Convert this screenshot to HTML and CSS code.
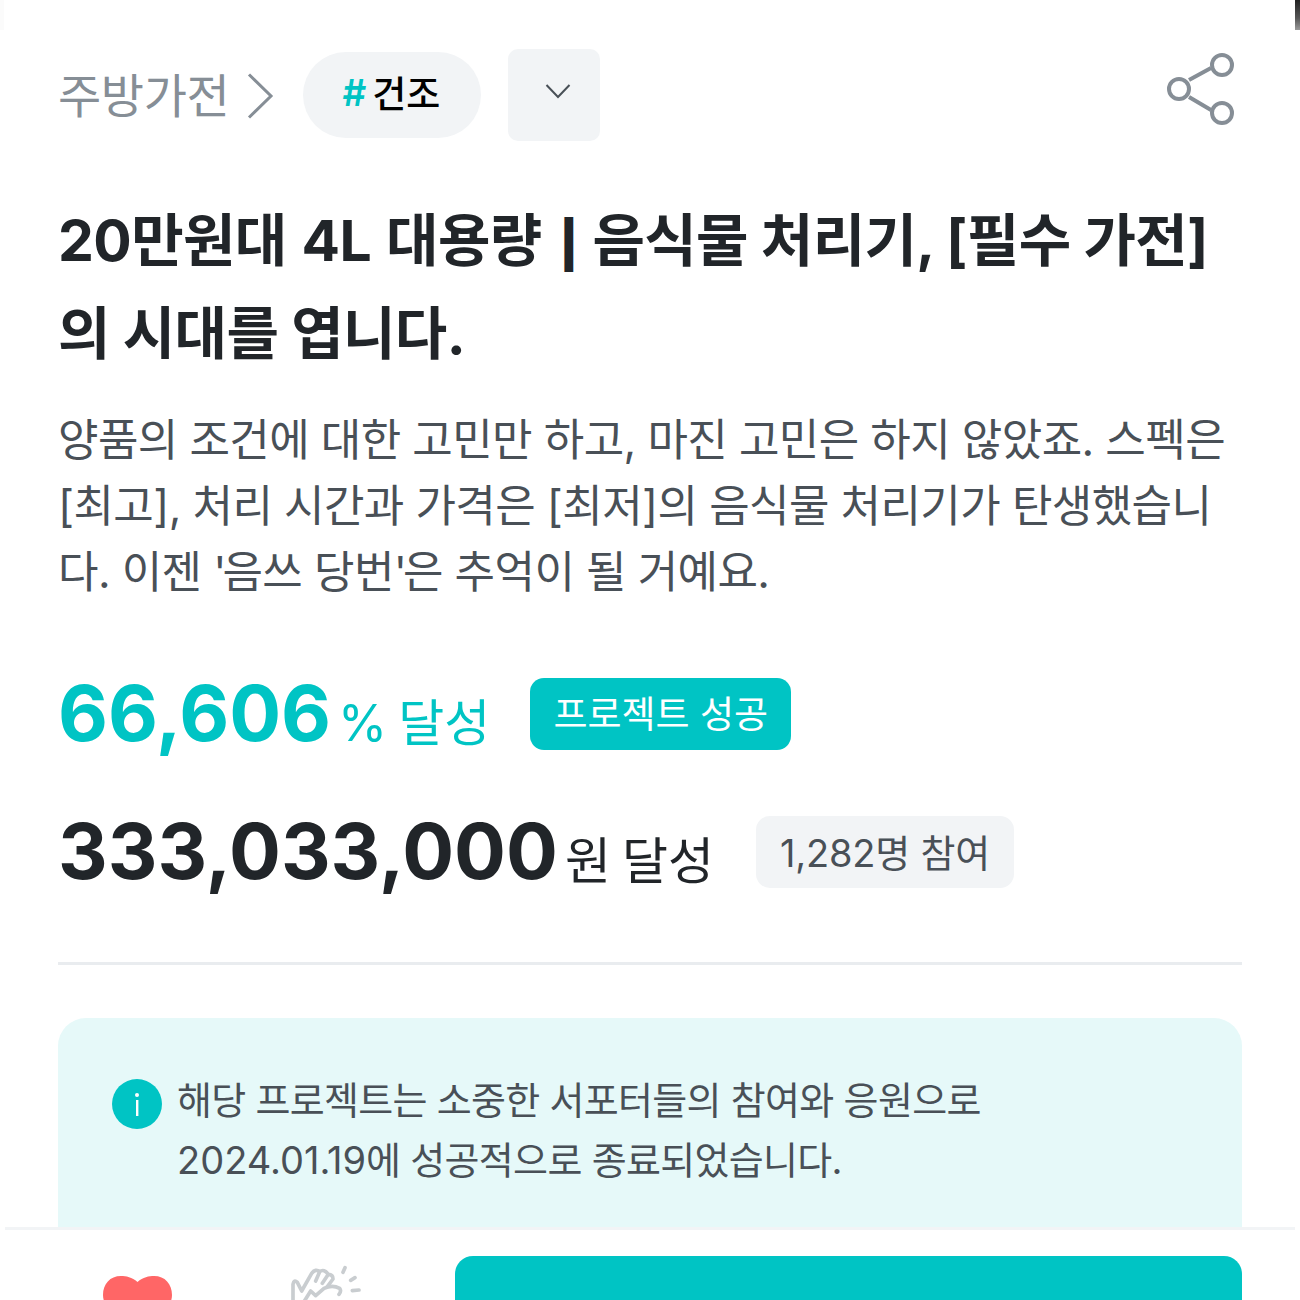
FILE: index.html
```html
<!DOCTYPE html>
<html lang="ko">
<head>
    <meta charset="UTF-8">
    <title>프로젝트 상세</title>
    <link rel="stylesheet" href="styles.css">
</head>
<body>
    <div id="page">
        <div class="edge edge_left"></div>
        <div class="edge edge_right"></div>

        <div class="top_row">
            <span class="category">주방가전</span>
            <svg class="crumb_arrow" width="28" height="46" viewBox="0 0 28 46">
                <path d="M3 1.500 L25 23 L3 44.500" fill="none" stroke="#868e96" stroke-width="3"/>
            </svg>
            <span class="tag"><span class="hash">#</span>건조</span>
            <span class="more_btn">
                <svg width="26" height="16" viewBox="0 0 26 16">
                    <path d="M1.500 2 L13 14 L24.500 2" fill="none" stroke="#495057" stroke-width="2"/>
                </svg>
            </span>
            <svg class="share" width="70" height="72" viewBox="0 0 70 72">
                <path d="M23 27 L45 15 M23 44 L45 57" stroke="#868e96" stroke-width="4" fill="none"/>
                <circle cx="13" cy="36" r="10" fill="none" stroke="#868e96" stroke-width="4"/>
                <circle cx="56" cy="12" r="10" fill="none" stroke="#868e96" stroke-width="4"/>
                <circle cx="56" cy="60" r="10" fill="none" stroke="#868e96" stroke-width="4"/>
            </svg>
        </div>

        <h1 class="title">20만원대 <span class="latin">4L</span> 대용량 <span class="bar">|</span> 음식물 처리기, [필수 가전]<br>의 시대를 엽니다.</h1>
        <p class="desc">양품의 조건에 대한 고민만 하고, 마진 고민은 하지 않았죠. 스펙은<br>[최고], 처리 시간과 가격은 [최저]의 음식물 처리기가 탄생했습니<br>다. 이젠 <span class="quote">'</span>음쓰 당번<span class="quote">'</span>은 추억이 될 거예요.</p>

        <div class="stat stat_rate">
            <span class="num">66,606</span>
            <span class="unit">% 달성</span>
            <span class="badge badge_success">프로젝트 성공</span>
        </div>
        <div class="stat stat_amount">
            <span class="num">333,033,000</span>
            <span class="unit">원 달성</span>
            <span class="badge badge_count">1,282명 참여</span>
        </div>

        <div class="divider"></div>

        <div class="notice">
            <span class="info_icon">
                <svg width="50" height="50" viewBox="0 0 50 50">
                    <circle cx="25" cy="25" r="25" fill="#00c4c4"/>
                    <circle cx="25" cy="16" r="2" fill="#fff"/>
                    <rect x="24" y="21" width="2.400" height="16" fill="#fff"/>
                </svg>
            </span>
            <p>해당 프로젝트는 소중한 서포터들의 참여와 응원으로<br><span class="date">2024.01.19</span>에 성공적으로 종료되었습니다.</p>
        </div>

        <div class="bottom_bar">
            <svg class="heart" width="69" height="60" viewBox="0 0 69 60">
                <path d="M34.500 6 C29 1 23 0 18 0 C7 0 0 8 0 19 C0 34 20 50 34.500 60 C49 50 69 34 69 19 C69 8 62 0 51 0 C46 0 40 1 34.500 6 Z" fill="#ff6666"/>
            </svg>
            <svg class="clap" width="110" height="45" viewBox="0 0 330 135">
                <g fill="none" stroke="#c9cdd0" stroke-width="11" stroke-linecap="round" stroke-linejoin="round">
                    <path d="M72 140 L72 88 Q75 72 85 82 L98 108 L128 55 Q140 40 152 50 L140 78 M152 50 Q165 40 178 58 L160 85 M178 58 Q192 58 192 72 L175 95"/>
                    <path d="M105 140 L125 108 L140 122 L165 100 Q190 88 212 100 Q218 108 210 118"/>
                    <path d="M228 38 L222 52 M258 68 L245 76 M270 105 L250 107"/>
                </g>
            </svg>
            <div class="cta"></div>
        </div>
    </div>
</body>
</html>
```

FILE: styles.css
```css
* {
    box-sizing: border-box;
}

html, body {
    margin: 0;
    background-color: white;
}

#page {
    position: relative;
    width: 1300px;
    height: 1300px;
    overflow: hidden;
    padding: 49px 58px 0 58px;
    font-family: Inter, "Noto Sans CJK KR", sans-serif;
    color: #212529;
}

.edge {
    position: absolute;
    top: 0;
    height: 30px;
}

.edge_left {
    left: 0;
    width: 4px;
    background-color: #fbfbfb;
}

.edge_right {
    right: 0;
    width: 5px;
    background: linear-gradient(#222, #555 60%, #999);
}

.top_row {
    display: flex;
    align-items: center;
    height: 92px;
}

.category {
    font-size: 47px;
    color: #868e96;
    letter-spacing: -0.4px;
    line-height: 1;
}

.crumb_arrow {
    margin-left: 17px;
    margin-top: 2px;
}

.tag {
    display: flex;
    align-items: center;
    justify-content: center;
    width: 178px;
    height: 86px;
    margin-left: 29px;
    padding-bottom: 6px;
    padding-right: 2px;
    border-radius: 43px;
    background-color: #f2f4f6;
    font-size: 37px;
    font-weight: 500;
    color: black;
}

.hash {
    color: #00c4c4;
    margin-right: 6px;
    font-weight: 600;
}

.more_btn {
    display: flex;
    justify-content: center;
    width: 92px;
    height: 92px;
    margin-left: 27px;
    padding-top: 34px;
    padding-left: 7px;
    border-radius: 10px;
    background-color: #f2f4f6;
}

.share {
    margin-left: auto;
    margin-right: 6px;
    margin-top: -13px;
}

.title {
    margin: 53px 0 0 0;
    font-size: 57px;
    line-height: 93px;
    font-weight: 700;
    letter-spacing: -0.6px;
    color: #212529;
    white-space: nowrap;
}

.latin {
    margin: 0 2px;
}

.bar {
    margin: 0 2px 0 5px;
    font-size: 46px;
    line-height: 1;
    font-weight: 900;
}

.desc {
    margin: 27px 0 0 0;
    font-size: 44px;
    line-height: 66px;
    color: #495057;
    letter-spacing: -0.6px;
    white-space: nowrap;
}

.quote {
    letter-spacing: -4px;
}

.stat {
    display: flex;
    align-items: center;
    height: 72px;
}

.stat_rate {
    margin-top: 73px;
    color: #00c4c4;
}

.stat_amount {
    margin-top: 66px;
}

.num {
    margin-top: -2px;
    font-size: 77px;
    font-weight: 700;
    line-height: 72px;
}

.unit {
    font-size: 50px;
    margin-left: 7px;
    margin-top: 18px;
    line-height: 60px;
    word-spacing: -3px;
}

.badge {
    display: flex;
    align-items: center;
    justify-content: center;
    height: 72px;
    margin-left: 40px;
    padding-bottom: 4px;
    border-radius: 14px;
}

.badge_success {
    width: 261px;
    background-color: #00c4c4;
    color: white;
    font-size: 37px;
}

.badge_count {
    width: 258px;
    margin-left: 42px;
    background-color: #f2f4f6;
    color: #495057;
    font-size: 38px;
    letter-spacing: -0.2px;
}

.divider {
    height: 3px;
    margin-top: 74px;
    background-color: #e9ecef;
}

.notice {
    display: flex;
    height: 260px;
    margin-top: 53px;
    padding: 52px 54px 0 54px;
    border-radius: 28px;
    background-color: #e6f9f9;
}

.info_icon {
    height: 50px;
    margin-top: 9px;
}

.notice p {
    margin: 0 0 0 15px;
    font-size: 38px;
    line-height: 60px;
    color: #495057;
    letter-spacing: -0.7px;
}

.date {
    letter-spacing: 0;
}

.bottom_bar {
    position: absolute;
    left: 5px;
    right: 5px;
    bottom: 0;
    height: 73px;
    display: flex;
    background-color: white;
    border-top: 3px solid #f2f4f6;
}

.heart {
    margin: 46px 0 0 98px;
    flex-shrink: 0;
}

.clap {
    margin: 25px 0 0 97px;
    flex-shrink: 0;
}

.cta {
    position: absolute;
    left: 450px;
    right: 53px;
    top: 26px;
    height: 60px;
    border-radius: 18px 18px 0 0;
    background-color: #00c4c4;
}
```
